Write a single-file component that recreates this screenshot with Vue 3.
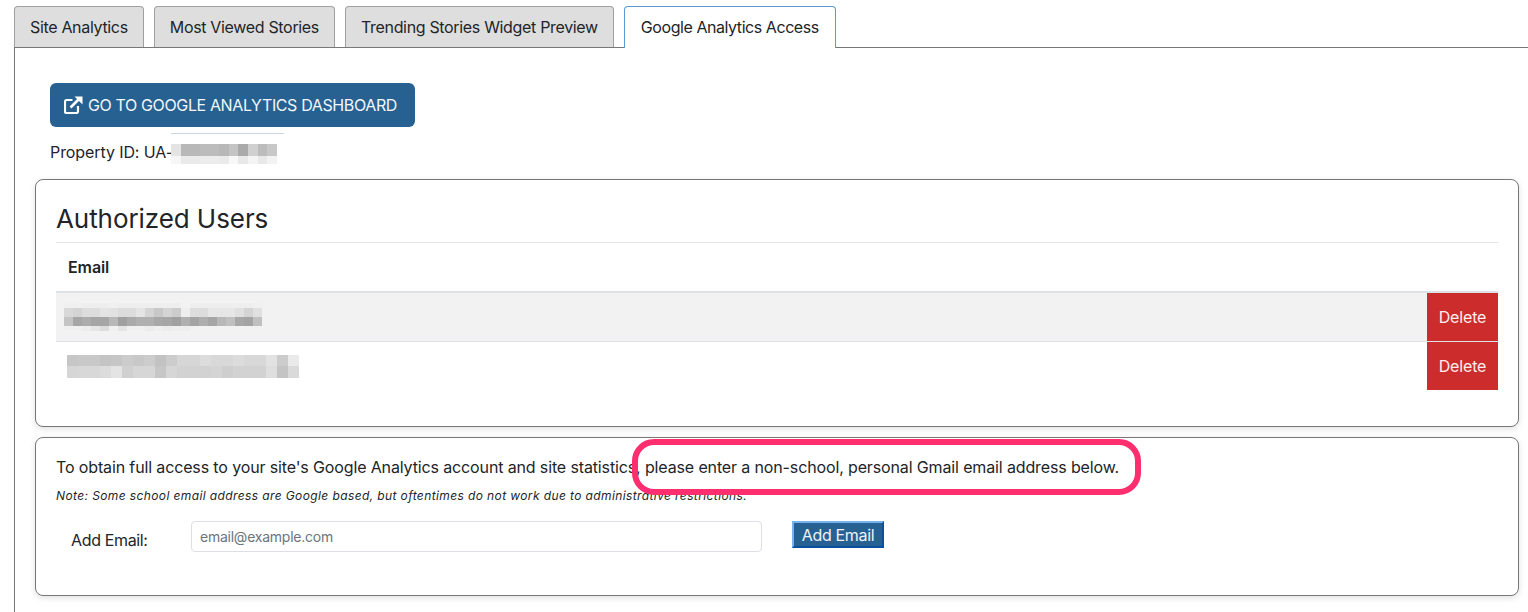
<script setup>
const g = v => `rgb(${v},${v},${v})`
const toHex = s => s.split(',').map(x => parseInt(x, 16))
const mosaic1 = [
  'f0,f0,ee,ee,ee,f0,ee,ee,ee,ee,ee,ee,ee,f2,ee,ee,ee,ee,ee,ee,ee,f0',
  'd8,d4,dd,dd,e4,e2,dc,dc,e4,d4,c8,d4,cc,ee,dd,dc,e6,e6,e6,e0,d4,e0',
  'c4,a6,ac,a6,a6,b8,a0,aa,b0,b0,a8,a6,a0,b0,a4,ae,a6,b8,c0,a8,a4,c0',
  'f0,f0,ec,e6,dc,f0,e4,f0,f0,ec,f0,ec,ee,ee,f2,f2,f2,f2,f2,f2,f2,f2'
].map(toHex)
const mosaic2 = [
  'c6,c8,c8,c4,c6,cc,c8,cc,c2,cc,d6,d6,dc,d8,d8,dc,d8,d8,e2,cc,ea',
  'd6,d8,d8,dc,e4,d0,d6,d6,c6,d6,d2,d2,d2,d4,ce,d2,d2,d2,de,c4,da'
].map(toHex)
const mosaic3 = [
  'e4,b8,b8,bc,bc,b8,c4,aa,d0,bc,c8',
  'f6,ea,ea,ec,ec,ea,f8,e8,f4,e8,f2'
].map(toHex)
const tabs = ['Site Analytics', 'Most Viewed Stories', 'Trending Stories Widget Preview', 'Google Analytics Access']
</script>

<template>
  <div class="page">
    <div class="tabs">
      <div v-for="(t, i) in tabs" :key="t" class="tab" :class="{ active: i === 3 }">{{ t }}</div>
    </div>
    <div class="panel">
      <a class="dash">
        <svg class="ext" width="19" height="18" viewBox="0 0 19 18" fill="none" stroke="#fff" stroke-width="2.200">
          <path d="M14 10V15.500a1.500 1.500 0 0 1-1.500 1.500H2.500A1.500 1.500 0 0 1 1 15.500V5.500A1.500 1.500 0 0 1 2.500 4H8.500" />
          <path d="M6.500 11.500 15.500 2.500" stroke-width="2.600" />
          <path d="M10.500 .5H18.500V8.500Z" fill="#fff" stroke="none" />
        </svg>
        GO TO GOOGLE ANALYTICS DASHBOARD
      </a>
      <div class="prop">
        <span>Property ID: UA-</span>
        <div class="mosaic m3">
          <div v-for="(r, i) in mosaic3" :key="i" class="mrow">
            <i v-for="(v, j) in r" :key="j" :style="{ background: g(v) }"></i>
          </div>
        </div>
      </div>

      <section class="card users">
        <h2>Authorized Users</h2>
        <div class="th">Email</div>
        <div class="row odd">
          <div class="mosaic m1">
            <div v-for="(r, i) in mosaic1" :key="i" class="mrow">
              <i v-for="(v, j) in r" :key="j" :style="{ background: g(v) }"></i>
            </div>
          </div>
          <button class="del">Delete</button>
        </div>
        <div class="row even">
          <div class="mosaic m2">
            <div v-for="(r, i) in mosaic2" :key="i" class="mrow">
              <i v-for="(v, j) in r" :key="j" :style="{ background: g(v) }"></i>
            </div>
          </div>
          <button class="del">Delete</button>
        </div>
      </section>

      <section class="card access">
        <p class="lead">To obtain full access to your site's Google Analytics account and site statistics, please enter a non-school, personal Gmail email address below.</p>
        <p class="note">Note: Some school email address are Google based, but oftentimes do not work due to administrative restrictions.</p>
        <div class="form">
          <label>Add Email:</label>
          <input type="text" placeholder="email@example.com" />
          <button class="add">Add Email</button>
        </div>
        <div class="mark"></div>
      </section>
    </div>
  </div>
</template>

<style>
html, body { margin: 0; overflow: hidden; background: #fff; }
</style>

<style scoped>
.page {
  width: 1528px;
  height: 612px;
  overflow: hidden;
  padding: 6px 0 0 14px;
  box-sizing: border-box;
  font-family: Inter, "Liberation Sans", sans-serif;
  font-size: 16px;
  color: #212529;
}
.tabs { display: flex; gap: 10px; height: 41px; position: relative; z-index: 1; }
.tab {
  box-sizing: border-box;
  height: 41px;
  padding: 0 15px;
  line-height: 41px;
  background: #dedede;
  border: 1px solid #a0a0a0;
  border-bottom: 0;
  border-radius: 4px 4px 0 0;
  letter-spacing: -0.33px;
}
.tab.active {
  height: 42px;
  padding: 0 16px;
  background: #fff;
  border-color: #5c9bd1;
  letter-spacing: -0.44px;
}
.panel {
  border-top: 1px solid #777;
  border-left: 1px solid #777;
  padding: 35px 9px 0 20px;
  height: 560px;
}
.dash {
  display: flex;
  align-items: center;
  gap: 5px;
  box-sizing: border-box;
  margin-left: 15px;
  width: 365px;
  height: 44px;
  padding-left: 14px;
  background: #266191;
  border-radius: 6px;
  color: #f2f6fa;
  letter-spacing: -0.37px;
}
.ext { flex: none; }
.prop {
  display: flex;
  margin: 16px 0 0 15px;
  height: 36px;
  align-items: flex-start;
  position: relative;
}
.prop span { line-height: 20px; margin-top: -1px; letter-spacing: -0.09px; }
.mosaic { display: flex; flex-direction: column; }
.mrow { display: flex; }
.mrow i { display: block; }
.m3 { position: absolute; left: 121px; top: 1px; width: 106px; }
.m3 .mrow i { width: 9.640px; height: 12px; }
.m3 .mrow + .mrow i { height: 8px; }
.m3::before {
  content: "";
  position: absolute;
  top: -11px;
  left: 0;
  width: 113px;
  height: 1px;
  background: #c9d5e2;
}
.card {
  box-sizing: border-box;
  border: 1px solid #777;
  border-radius: 8px;
  background: #fff;
  box-shadow: 0 2px 6px rgba(0, 0, 0, 0.12);
  padding: 0 20px;
  position: relative;
}
.users { height: 248px; margin-bottom: 10px; }
.access { height: 159px; }
h2 {
  margin: 0;
  height: 63px;
  line-height: 77px;
  box-sizing: border-box;
  font-size: 26px;
  font-weight: 400;
  border-bottom: 1px solid #e2e4e7;
  letter-spacing: -0.07px;
}
.th {
  box-sizing: border-box;
  height: 50px;
  line-height: 48px;
  padding-left: 12px;
  font-weight: 600;
  border-bottom: 2px solid #dee2e6;
  letter-spacing: -0.1px;
}
.row {
  display: flex;
  align-items: center;
  justify-content: space-between;
  height: 49px;
  box-sizing: border-box;
}
.row.even { height: 48px; }
.row.odd { background: #f2f2f2; border-bottom: 1px solid #dee2e6; }
.del {
  align-self: stretch;
  width: 71px;
  border: 0;
  padding: 0;
  background: #cd2c2c;
  color: #fbeeee;
  font: inherit;
  letter-spacing: -0.15px;
}
.m1 { margin-left: 8px; }
.m1 .mrow i { width: 9px; height: 9px; }
.m1 .mrow:first-child i, .m1 .mrow:last-child i { height: 5px; }
.m2 { margin-left: 11px; }
.m2 .mrow i { width: 11.050px; height: 11.500px; }
.lead { margin: 0; padding-top: 19px; line-height: 20px; font-size: 16px; letter-spacing: -0.134px; }
.note { margin: 12px 0 0; font-size: 12px; font-style: italic; line-height: 14px; letter-spacing: 0.39px; }
.form { display: flex; align-items: flex-start; margin: 18px 0 0 15px; }
.form label { width: 120px; margin-top: 9px; line-height: 20px; letter-spacing: -0.35px; }
input {
  box-sizing: border-box;
  width: 571px;
  height: 31px;
  border: 1px solid #dcdfe3;
  border-radius: 4px;
  padding: 0 8px;
  font-family: inherit;
  font-size: 14px;
  letter-spacing: -0.24px;
  color: #495057;
  outline: none;
}
input::placeholder { color: #6c757d; opacity: 1; }
.add {
  box-sizing: border-box;
  margin: 0 0 0 30px;
  width: 92px;
  height: 27px;
  padding: 0;
  background: #266191;
  border: 2px solid;
  border-color: #76b2ef #0a4f9f #0a4f9f #76b2ef;
  color: #eef3f8;
  font: inherit;
  letter-spacing: -0.33px;
}
.mark {
  position: absolute;
  left: 596px;
  top: 1px;
  width: 509px;
  height: 56px;
  box-sizing: border-box;
  border: 6px solid #ff2e6e;
  border-radius: 22px;
  pointer-events: none;
}
</style>
